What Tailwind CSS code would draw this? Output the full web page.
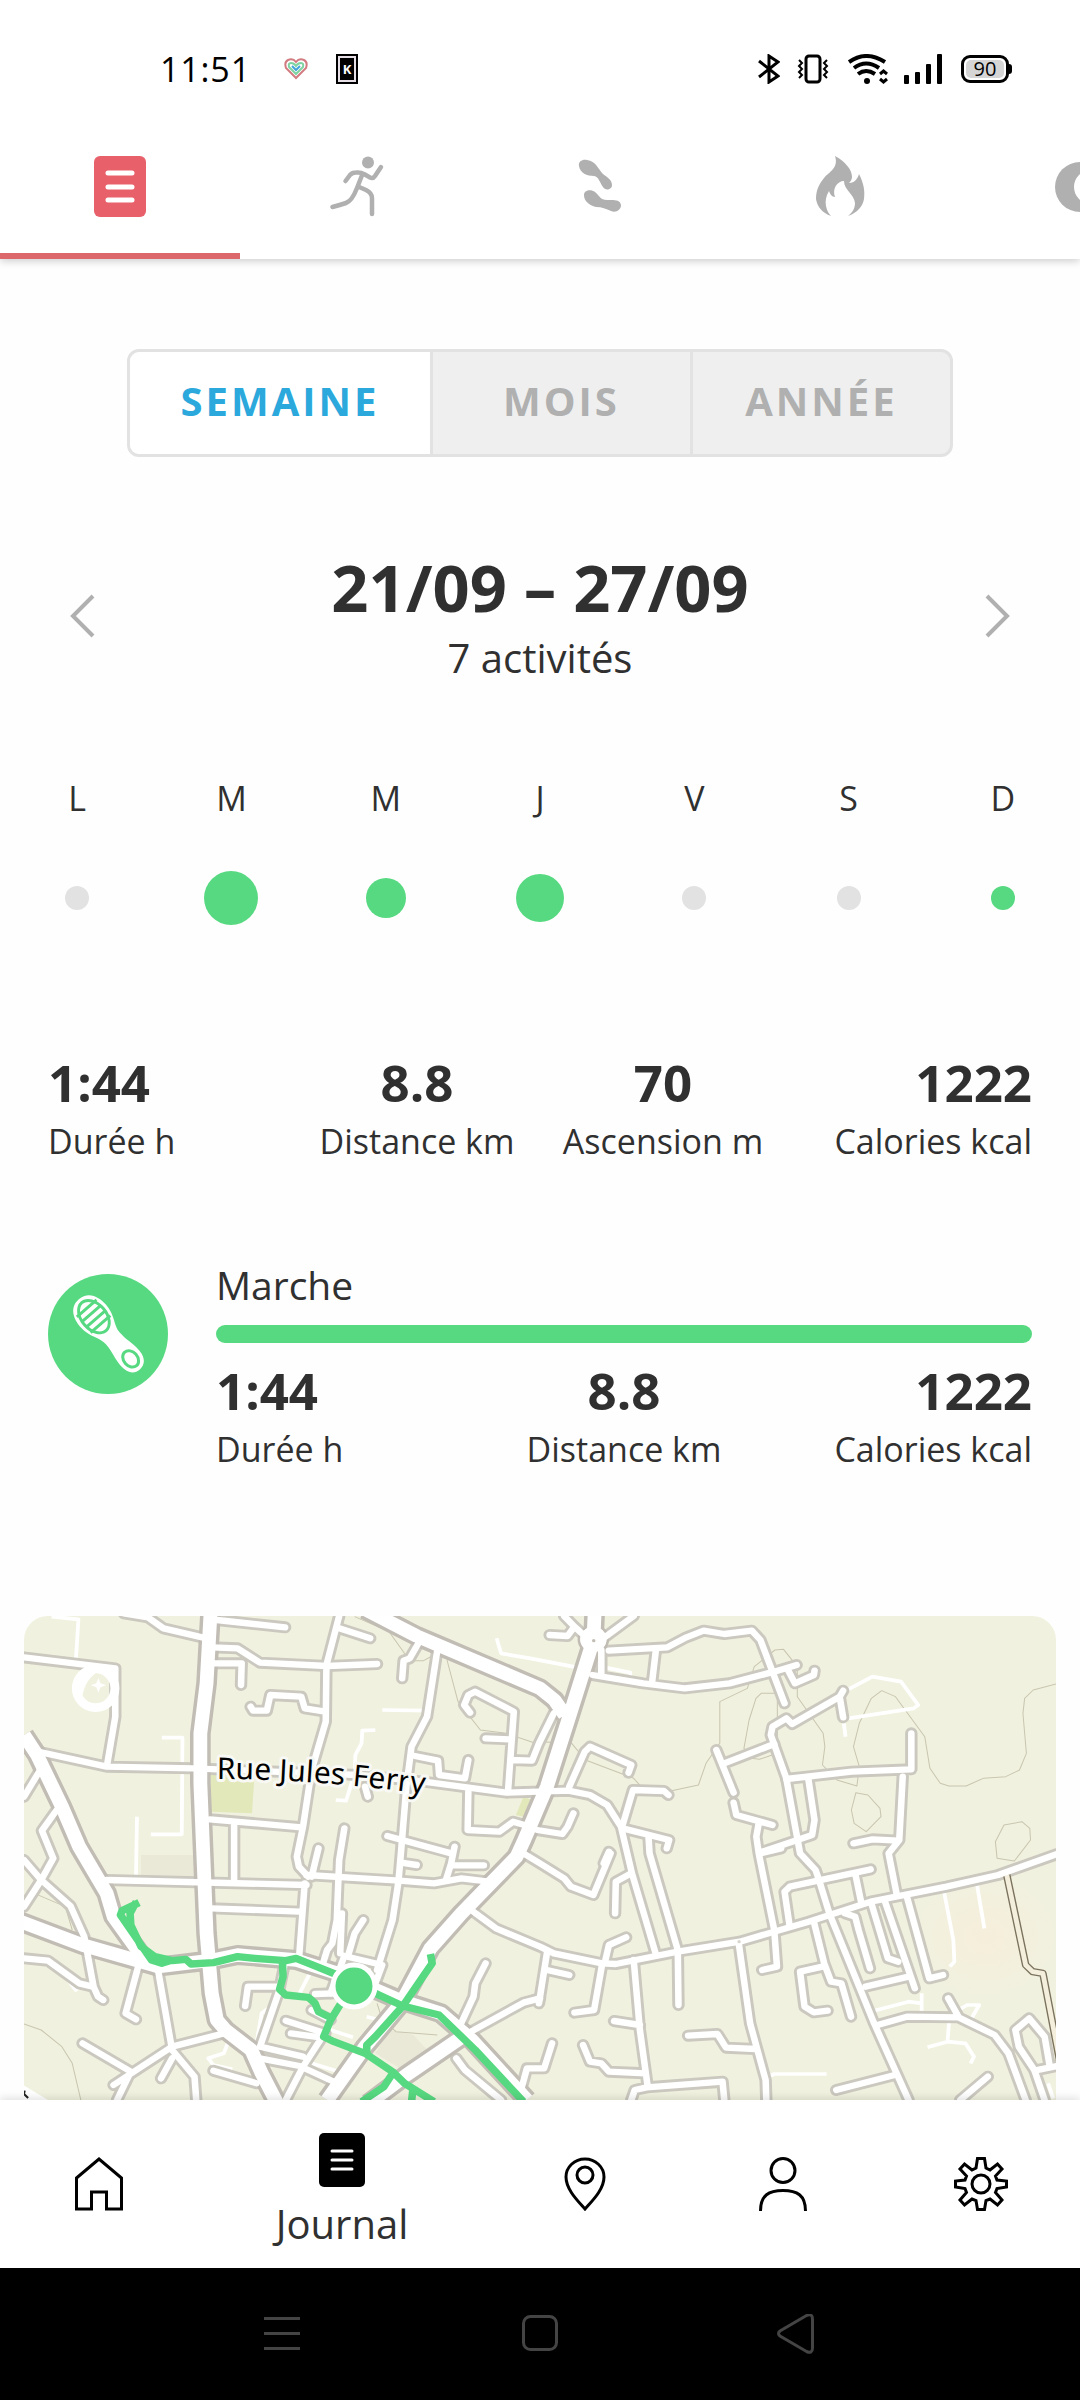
<!DOCTYPE html>
<html lang="fr">
<head>
  <meta charset="UTF-8" />
  <meta name="viewport" content="width=device-width, initial-scale=1.0" />
  <title>Journal</title>
  <script src="https://cdn.jsdelivr.net/npm/@tailwindcss/browser@4"></script>
</head>
<body class="bg-[#fefefe] text-[#303030] font-['Open_Sans',sans-serif]">
<div class="h-screen flex flex-col overflow-hidden">

  <!-- Header -->
  <header class="relative z-10 shrink-0 bg-white shadow-[0_2px_8px_rgba(0,0,0,0.2)]">
    <div class="flex items-center justify-between h-[138px] pl-[160px] pr-[68px] text-black">
      <div class="flex items-center">
        <span class="text-[34px] leading-none tracking-wide w-[124px]">11:51</span>
        <svg class="w-[24px] h-[22px] mr-[28px]" viewBox="0 0 24 22" fill="none" stroke-width="2">
          <path d="M12 20L2 10Q0 4 4 2Q9 0 12 4Q15 0 20 2Q24 4 22 10Z" stroke="#d27b80" />
          <path d="M12 16L5 9Q4 5 7 5Q10 5 12 8Q14 5 17 5Q20 5 19 9Z" stroke="#7fd3a0" />
          <path d="M8 8L12 12L16 8" stroke="#3fa4dc" />
        </svg>
        <div class="w-[22px] h-[30px] bg-black p-[2px]">
          <div class="h-full border-2 border-[#e6dfe6] text-white text-[13px] leading-none font-bold flex items-center justify-center">K</div>
        </div>
      </div>
      <div class="flex items-center">
        <svg class="w-[22px] h-[30px] mr-[17px]" viewBox="0 0 22 30" fill="none" stroke="#000" stroke-width="3">
          <path d="M1 7L20 22L11 28V2L20 8L1 23" />
        </svg>
        <svg class="w-[32px] h-[30px] mr-[19px]" viewBox="0 0 32 30" fill="none" stroke="#000" stroke-width="3">
          <rect x="9" y="2" width="14" height="26" rx="3" />
          <path d="M2 6l3 3l-3 3l3 3l-3 3l3 3l-3 3M30 6l-3 3l3 3l-3 3l3 3l-3 3l3 3" stroke-width="2" />
        </svg>
        <svg class="w-[40px] h-[30px] mr-[16px]" viewBox="0 0 40 30" fill="none" stroke="#000" stroke-width="4">
          <path d="M1 8Q18 -4 37 8M6 14Q18 5 31 14M10 20Q18 14 27 20" />
          <circle cx="19" cy="27" r="3" fill="#000" stroke="none" />
          <path d="M32 20l3.5 -3l3.5 3M32 25l3.5 3l3.5 -3" stroke-width="3" />
        </svg>
        <svg class="w-[39px] h-[30px] mr-[18px]" viewBox="0 0 39 30">
          <rect y="21" width="5" height="9" rx="1" /><rect x="11" y="18" width="5" height="12" rx="1" />
          <rect x="22" y="10" width="5" height="20" rx="1" /><rect x="33" width="5" height="30" rx="1" />
        </svg>
        <div class="flex items-center">
          <div class="w-[48px] h-[28px] border-3 border-black rounded-[9px] p-[2px]">
            <div class="h-full rounded-[5px] bg-[#d5d5d5] flex items-center justify-center text-[20px] leading-none">90</div>
          </div>
          <div class="w-[3px] h-[10px] bg-black rounded-r-sm"></div>
        </div>
      </div>
    </div>

    <nav class="flex overflow-hidden text-[#b0b0b0]">
      <button class="w-60 h-[121px] shrink-0 flex flex-col items-center border-b-6 border-[#dc686c] pt-[18px]" aria-label="Journal">
        <svg class="w-[52px] h-[61px]" viewBox="0 0 52 61">
          <rect width="52" height="61" rx="6" fill="#e8606a" />
          <path d="M14 17H38M14 31H38M14 44H38" stroke="#fff" stroke-width="5" stroke-linecap="round" />
        </svg>
      </button>
      <button class="w-60 h-[121px] shrink-0 flex justify-center pt-[18px]" aria-label="Activités">
        <svg class="w-[60px] h-[61px]" viewBox="0 0 60 61" fill="none" stroke="currentColor" stroke-width="4.5" stroke-linecap="round" stroke-linejoin="round">
          <circle cx="38" cy="6.5" r="6" fill="currentColor" stroke="none" />
          <path d="M15.5 25L20 19Q22 16.5 26 16.5Q31 16 34 18L40 21.5Q43 23 45 20L51 11" />
          <path d="M32.5 18L27 32Q22 45 16 47Q10 49 2.5 51M28 30.5L36 34Q42 37 42 42V58" />
        </svg>
      </button>
      <button class="w-60 h-[121px] shrink-0 flex justify-center pt-[21px]" aria-label="Pas">
        <svg class="w-[44px] h-[55px]" viewBox="0 0 44 55" fill="currentColor">
          <path d="M1 7C0 2 5 0 9 1C18 2 20 10 25 15C29 18 34 21 34 26C34 31 27 32 25 28C22 24 21 18 16 17C9 17 2 14 1 7Z" />
          <path d="M6 36C6 31 13 30 17 33C22 37 22 41 29 41C35 41 42 40 43 46C43 51 38 54 33 52C28 50 24 48 18 48C11 46 6 42 6 36Z" />
        </svg>
      </button>
      <button class="w-60 h-[121px] shrink-0 flex justify-center pt-[18px]" aria-label="Calories">
        <svg class="w-[49px] h-[61px]" viewBox="0 0 49 61" fill="currentColor">
          <path d="M19 0C30 6 36 14 36 21C36 24 34 26 33 27C39 27 42 22 43 18C48 28 49 35 48 43C47 50 41 57 32 60C37 56 39 52 39 47C38 38 28 34 28 25C21 25 16 33 19 41C16 41 14 38 13 35C10 40 9 45 10 50C11 55 13 58 15 60C6 57 1 50 0 43C0 33 4 27 8 22C13 16 23 12 19 0Z" />
        </svg>
      </button>
      <button class="w-60 h-[121px] shrink-0 flex justify-center pt-[24px]" aria-label="Sommeil">
        <svg class="w-[52px] h-[50px]" viewBox="0 0 52 50"><circle cx="26" cy="25" r="25" fill="currentColor" /><circle cx="37" cy="25" r="17" fill="#fff" /></svg>
      </button>
    </nav>
  </header>

  <main class="flex-1 min-h-0 overflow-hidden pt-[90px]">
    <!-- Period switch -->
    <div class="flex w-[826px] max-w-full h-[108px] mx-auto rounded-xl border-3 border-[#e2e2e2] bg-[#efefef] overflow-hidden text-[40px] leading-[52px] font-bold tracking-[3px] text-[#b0b0b0]">
      <button class="flex-[7] bg-white text-[#2ba8dc] pb-1">SEMAINE</button>
      <button class="flex-[6] border-l-3 border-[#e2e2e2] pb-1">MOIS</button>
      <button class="flex-[6] border-l-3 border-[#e2e2e2] pb-1">ANNÉE</button>
    </div>

    <!-- Current week -->
    <div class="flex items-center justify-between px-[70px] mt-[88px]">
      <button class="w-[26px]" aria-label="Semaine précédente">
        <svg class="w-[26px] h-[46px]" viewBox="0 0 26 46" fill="none" stroke="#b0b0b0" stroke-width="4"><path d="M23 3L3 23L23 43" /></svg>
      </button>
      <div class="text-center">
        <h1 class="text-[65px] leading-[84px] font-bold">21/09 – 27/09</h1>
        <p class="text-[40px] leading-[58px]">7 activités</p>
      </div>
      <button class="w-[26px]" aria-label="Semaine suivante">
        <svg class="w-[26px] h-[46px]" viewBox="0 0 26 46" fill="none" stroke="#b0b0b0" stroke-width="4"><path d="M3 3L23 23L3 43" /></svg>
      </button>
    </div>

    <!-- Days -->
    <div class="grid grid-cols-7 mt-[87px] text-center text-[34px] leading-[48px]">
      <span>L</span><span>M</span><span>M</span><span>J</span><span>V</span><span>S</span><span>D</span>
    </div>
    <div class="grid grid-cols-7 place-items-center h-[54px] mt-[49px]">
      <i class="size-6 rounded-full bg-[#e2e2e2]"></i>
      <i class="size-[54px] rounded-full bg-[#57d981]"></i>
      <i class="size-10 rounded-full bg-[#57d981]"></i>
      <i class="size-12 rounded-full bg-[#57d981]"></i>
      <i class="size-6 rounded-full bg-[#e2e2e2]"></i>
      <i class="size-6 rounded-full bg-[#e2e2e2]"></i>
      <i class="size-6 rounded-full bg-[#57d981]"></i>
    </div>

    <!-- Totals -->
    <dl class="grid grid-cols-4 px-12 mt-[122px] text-center text-[34px] leading-[48px] whitespace-nowrap">
      <div class="flex flex-col-reverse text-left"><dt>Durée h</dt><dd class="text-[51px] leading-[70px] font-bold">1:44</dd></div>
      <div class="flex flex-col-reverse"><dt>Distance km</dt><dd class="text-[51px] leading-[70px] font-bold">8.8</dd></div>
      <div class="flex flex-col-reverse"><dt>Ascension m</dt><dd class="text-[51px] leading-[70px] font-bold">70</dd></div>
      <div class="flex flex-col-reverse text-right"><dt>Calories kcal</dt><dd class="text-[51px] leading-[70px] font-bold">1222</dd></div>
    </dl>

    <section class="flex gap-12 px-12 mt-[92px]">
      <svg class="size-[120px] shrink-0 mt-[17px]" viewBox="0 0 120 120">
        <circle cx="60" cy="60" r="60" fill="#57d981" />
        <g transform="translate(61 60) rotate(-41)">
          <path d="M0 -46C13 -46 17 -34 17 -24C17 -10 9 -4 9 6C9 16 12 22 12 32C12 42 7 47 0 47C-7 47 -12 42 -12 32C-12 22 -9 16 -9 6C-9 -4 -17 -10 -17 -24C-17 -34 -13 -46 0 -46Z" fill="#fff" />
          <ellipse cy="-23" rx="14" ry="20" fill="#57d981" />
          <ellipse cy="-23" rx="11" ry="17" fill="#fff" />
          <path d="M-13 -34L13 -34M-13 -27L13 -27M-13 -20L13 -20M-13 -13L13 -13" stroke="#57d981" stroke-width="3" />
          <ellipse cy="33" rx="7" ry="9" fill="none" stroke="#57d981" stroke-width="3" />
        </g>
      </svg>
      <div class="flex-1">
        <h2 class="text-[39px] leading-[56px]">Marche</h2>
        <div class="h-[18px] mt-[12px] rounded-full bg-[#57d981]"></div>
        <dl class="grid grid-cols-3 mt-[12px] text-center text-[34px] leading-[48px] whitespace-nowrap">
          <div class="flex flex-col-reverse text-left"><dt>Durée h</dt><dd class="text-[51px] leading-[70px] font-bold">1:44</dd></div>
          <div class="flex flex-col-reverse"><dt>Distance km</dt><dd class="text-[51px] leading-[70px] font-bold">8.8</dd></div>
          <div class="flex flex-col-reverse text-right"><dt>Calories kcal</dt><dd class="text-[51px] leading-[70px] font-bold">1222</dd></div>
        </dl>
      </div>
    </section>

    <!-- Map -->
    <div class="relative mx-6 mt-[143px] h-[484px] rounded-t-3xl overflow-hidden bg-[#f1f1df]">
      <svg class="w-full h-full" viewBox="70 48 2996 1452" preserveAspectRatio="none" fill="none" stroke-linejoin="round">
        <defs>
          <radialGradient id="sand"><stop offset="0" stop-color="#f6eedb" /><stop offset="1" stop-color="#f1f1df" /></radialGradient>
          <g id="streets">
            <path d="M70 172L335 205V350L312 490M360 40L430 52L475 85L600 115M630 60L828 82M985 48L948 195L946 365L905 510L880 680L862 770L868 800L895 830" />
            <path d="M985 85L1075 115M615 142L690 145L755 188L950 198L1095 192M620 190H702L700 255M728 320L735 332H775L785 285L875 290L885 325L945 335" />
            <path d="M1215 130L1190 175L1172 182L1168 235M1270 150L1240 350L1195 440L1180 560L1165 750L1157 845L1140 960L1095 1110" />
            <path d="M1205 468L1272 482L1275 525L1350 535L1360 480M1365 338L1348 315L1360 285L1380 275L1492 335L1475 575M1410 415L1480 418M1485 480L1545 482L1565 430L1608 340" />
            <path d="M110 455L310 500L560 505L1040 525L1230 545L1470 578L1650 572L1713 585L1763 615L1803 680L1835 820L1905 1065" />
            <path d="M120 505L70 590M165 630L122 692L155 775L120 840L70 920M70 780L120 840L205 918L245 1010L272 1160L285 1190L300 1200" />
            <path d="M610 658L875 682M680 675V840M1000 685L985 780L978 960L965 1030L950 1050L938 1090M925 745L905 830M1060 560L1068 590M1125 708L1310 760M1320 740L1310 790L1295 840" />
            <path d="M1360 575L1358 690L1450 695L1490 665L1540 680M310 840L890 855M890 825L1160 842L1260 850L1340 835L1420 845M885 850L868 1080M615 925L870 935M1165 788L1210 795M1315 796H1405" />
            <path d="M993 940L988 1060M1055 960L1030 1000L1010 1070M1000 1068L1110 1095L1090 1150M1000 1068L960 1180M70 1075L140 1082L230 1150L270 1160" />
            <path d="M400 1105L365 1240L395 1258M460 1115L500 1350L565 1430L570 1500M650 1300L500 1340L330 1455M240 1330L380 1415L340 1500M500 1375L468 1435" />
            <path d="M712 1218L720 1160H810M825 1100L810 1175L755 1340M830 1262L945 1300M845 1300L930 1312M755 1340L880 1370M755 1375L870 1398L980 1450M930 1320L880 1400L830 1500M620 1412L745 1450M915 1182L975 1180M905 1230L960 1260" />
            <path d="M1410 1090L1380 1150L1375 1190L1330 1290M1375 935L1440 985L1568 1040L1608 1060L1748 1090L1788 1092L1968 1055L2148 1025L2348 965L2528 905L2748 860L2898 825L3070 762" />
            <path d="M1568 1195L1520 1208L1350 1305M1325 1375L1350 1410L1455 1500M1510 1480L1530 1405L1580 1405L1603 1330M1520 760L1568 790L1638 835L1658 860L1723 885L1773 760" />
            <path d="M1596 105L1648 108L1668 80L1638 48M1668 80L1700 110M1840 48L1758 110M1768 152L1938 142L1993 112L2043 92L2103 102L2183 92L2208 120L2278 310" />
            <path d="M1905 145L1893 250M1720 225L1868 250L1988 265L2118 250L2248 215L2313 195M1746 150V220M2288 210L2308 250L2363 225L2365 212" />
            <path d="M2448 272L2438 290L2300 372L2283 355L2243 380L2238 405L2283 535L2323 760L2368 810L2378 840L2408 940L2538 1270L2638 1500M2438 290L2448 352" />
            <path d="M2103 490L2248 432M2080 450L2130 578M2130 608L2138 645L2243 675M2203 670L2196 710L2203 760L2248 990L2256 1100L2213 1110M2208 757L2358 705L2365 660L2346 530M2283 537L2473 515L2646 508V400M2621 530L2611 720L2580 760L2603 880M2478 730L2533 718L2608 722" />
            <path d="M1653 560L1698 455L1713 440L1833 495L1825 518M1808 675L1838 570L1928 573L1941 585M1808 685L1943 720L1936 745M1883 710L1886 760L1968 1050L1970 1215M1560 690L1633 702L1648 680L1665 640M1768 755L1753 790M1833 820L1788 845L1786 940" />
            <path d="M1758 1080L1768 1035L1818 1012M1588 1060L1565 1210M1588 1110L1653 1125M1748 1095L1725 1230L1668 1238M1840 1080L1858 1290L1880 1455M1783 1263L1858 1275M1693 1335L1713 1385L1746 1390L1768 1415L1873 1420M1833 1500L1843 1470L1878 1462L2098 1445L2103 1500" />
            <path d="M2145 1030L2178 1270L2223 1440L2225 1500M1998 1307L2083 1302L2108 1343L2193 1347M2428 1470L2598 1425M2293 980L2278 875L2293 860L2528 808M2483 820L2500 905M2363 965L2393 1090L2413 1145L2443 1150L2471 1250" />
            <path d="M2388 1100L2323 1115L2336 1220L2363 1237L2403 1232M2453 940L2483 950L2493 990L2526 1105M2530 910L2578 1075L2608 1085M2568 900L2656 1165M2633 890L2698 1135L2738 1125M2513 1160L2638 1130" />
            <path d="M2548 1275L2633 1250L2783 1252L2888 1305L2928 1360L2978 1500M2753 1195L2783 1250M2788 1500L2868 1430M3048 1400L3033 1310L2988 1255L2948 1290L2958 1340L3003 1410L3033 1500M3003 1412L3068 1398M2208 760L2268 745" />
          </g>
          <g id="avenues">
            <path d="M1060 28L1210 108L1568 265L1610 300L1640 345M1727 30L1723 120L1653 350L1588 560L1520 725L1500 770L1340 940L1250 1045L1165 1210L1060 1340L950 1500" />
            <path d="M70 405L108 465L180 620L230 740L310 880L330 950L420 1080L470 1105M612 30L600 250L582 400V550L590 750L600 1000L615 1180L630 1260L655 1290L730 1350L760 1420L805 1510" />
            <path d="M60 965L240 1035L460 1100L620 1080L690 1065L860 1080L980 1120L1160 1200L1280 1240L1370 1320L1530 1500M1350 1305L1180 1425L1070 1510" />
          </g>
        </defs>

        <!-- land -->
        <ellipse cx="2860" cy="1010" rx="210" ry="180" fill="url(#sand)" />
        <path d="M612 520L738 545L732 640L612 635Z" fill="#e3e8bb" />
        <path d="M1520 590L1545 600L1520 650L1498 645Z" fill="#e3e8bb" />
        <path d="M410 765H575V830H410ZM1130 1290L1200 1305L1250 1360L1170 1410L1090 1360Z" fill="#eae8d7" />

        <!-- contour lines -->
        <g stroke="#c8c6b0" stroke-width="3">
          <path d="M1030 50L1130 95L1190 182H1230L1260 165M1298 180L1330 305L1395 390L1470 400L1555 430M1568 425L1660 430L1700 480L1840 535L1870 570L1950 572L2028 555L2050 490L2090 430V305L2170 265L2190 200L2250 150L2275 148L2315 200V290L2390 400L2395 440L2388 495L2430 540L2488 558L2495 500L2478 440L2495 370L2530 295L2560 272L2600 290L2685 410L2700 505L2730 550L2755 558H2805L2855 535L2920 530L2960 510L2980 460L2970 340L2975 295L3000 270L3066 252" />
          <path d="M2257 280H2210L2195 295L2175 360L2160 445L2180 475L2205 478L2257 460ZM2485 578L2520 585L2555 625L2558 650L2515 695L2480 670L2472 630ZM2915 675L2967 665L2990 685L2992 720L2945 783L2895 775L2890 725ZM100 880L190 920L210 990M70 1272L120 1290L180 1340L210 1390L235 1500M1095 1210L1110 1260L1150 1295L1270 1305" />
        </g>

        <!-- footpaths -->
        <g stroke="#fff" stroke-width="11">
          <path d="M150 50L228 58L220 190M470 413H530L528 703H438M398 650L395 835M1110 330L1240 332M1090 390L1052 392L1050 430L1032 465L1030 520L1005 602L975 600M1442 115L1455 160L1540 175L1690 205L1740 235L1890 265M1745 200L1830 218V245" />
          <path d="M2463 268L2533 230L2616 245L2666 315L2653 325L2463 355M2450 370L2455 410M780 1225L760 1240L745 1330M665 1320L650 1360L605 1375L620 1395L675 1408M900 1120L870 1180M190 1130L220 1170L240 1155M960 1290L1025 1312M1065 1250L1110 1262M890 1385L1000 1420M2228 1432L2248 1422H2400" />
          <path d="M2538 1232L2638 1205L2676 1210M2676 1180V1245M2783 1230L2808 1215H2843L2818 1260M2756 1260L2751 1325L2693 1342M2751 1325L2803 1330L2828 1370L2818 1390M2740 870L2768 1020L2771 1085L2758 1100M2836 850L2858 985M3043 1450L3058 1495" />
        </g>

        <use href="#streets" stroke="#cac8bf" stroke-width="36" stroke-linecap="round" />
        <use href="#avenues" stroke="#c1bcb4" stroke-width="60" />
        <path d="M2923 825L2978 1095L2998 1115L3028 1120L3080 1400" stroke="#7a725c" stroke-width="22" />
        <path d="M2923 825L2978 1095L2998 1115L3028 1120L3080 1400" stroke="#f4efdc" stroke-width="14" />
        <circle cx="1723" cy="118" r="42" fill="#fff" stroke="#c1bcb4" stroke-width="8" />
        <use href="#streets" stroke="#fff" stroke-width="19" stroke-linecap="round" />
        <use href="#avenues" stroke="#fff" stroke-width="40" />
        <circle cx="1723" cy="118" r="38" fill="#fff" />
        <circle cx="1724" cy="122" r="5" fill="#c1bcb4" />
        <circle cx="2146" cy="1025" r="5" fill="#d8d6cd" />
        <ellipse cx="278" cy="265" rx="56" ry="58" stroke="#fff" stroke-width="26" />
        <path d="M235 320Q240 240 285 215L225 230Z" fill="#fff" />
        <path d="M286 234L292 250L308 256L292 262L286 278L280 262L264 256L280 250Z" fill="#fff" />
        <path d="M60 1450L140 1500H60Z" fill="#fff" />
        <path d="M72 1472L70 1482L82 1494" stroke="#222" stroke-width="6" />

        <!-- recorded route -->
        <g stroke="#57d981" stroke-width="22">
          <path d="M404 908L355 932L350 945L400 1020L440 1080L470 1090L500 1080M396 905L378 940L380 975L410 1040L450 1070L500 1082L540 1078L555 1092L620 1088L690 1070L740 1075L830 1082L860 1075L920 1100L980 1125" />
          <path d="M820 1080L822 1130L812 1168L830 1185L895 1192L915 1210L925 1235L955 1250M990 1210L960 1260L940 1310L970 1325L1060 1360L1140 1415L1175 1450L1260 1505M1140 1420L1115 1460L1050 1505M1200 1460L1195 1505" />
          <path d="M1090 1180L1170 1218L1275 1245L1380 1350L1520 1505M1250 1062L1255 1090L1215 1150L1170 1218L1090 1310L1065 1335V1365" />
        </g>
      </svg>
      <svg class="absolute inset-0 w-full h-full">
        <path id="street-name" d="M193 163Q300 163 430 182" fill="none" />
        <text font-family="Noto Sans" font-size="30" fill="#000" stroke="#f8f8f4" stroke-width="6" stroke-linejoin="round" paint-order="stroke"><textPath href="#street-name">Rue Jules Ferry</textPath></text>
        <circle cx="330" cy="370" r="21" fill="#57d981" stroke="#fff" stroke-width="5" />
      </svg>
    </div>
  </main>

  <!-- Bottom navigation -->
  <nav class="relative z-10 shrink-0 flex h-[168px] bg-white shadow-[0_-2px_8px_rgba(0,0,0,0.12)]">
    <a href="#" class="flex-[11] flex items-center justify-center" aria-label="Accueil">
      <svg class="w-[48px] h-[54px]" viewBox="0 0 48 54" fill="none" stroke="#000" stroke-width="3"><path d="M1.5 21L24 2L46.5 21V52H31.5V35H16.5V52H1.5Z" /></svg>
    </a>
    <a href="#" class="flex-[16] flex flex-col items-center pt-[33px]">
      <svg class="w-[46px] h-[54px]" viewBox="0 0 46 54"><rect width="46" height="54" rx="5" /><path d="M13 18H33M13 27H33M13 36H33" stroke="#fff" stroke-width="3" stroke-linecap="round" /></svg>
      <span class="text-[40px] leading-[52px] mt-[11px]">Journal</span>
    </a>
    <a href="#" class="flex-[11] flex items-center justify-center" aria-label="Carte">
      <svg class="w-[42px] h-[54px]" viewBox="0 0 42 54" fill="none" stroke="#000" stroke-width="3"><path d="M21 52C15 45 2 33 2 20A19 18 0 0 1 40 20C40 33 27 45 21 52Z" /><circle cx="21" cy="18" r="8" /></svg>
    </a>
    <a href="#" class="flex-[11] flex items-center justify-center" aria-label="Profil">
      <svg class="w-[48px] h-[54px]" viewBox="0 0 48 54" fill="none" stroke="#000" stroke-width="3"><circle cx="24" cy="13.5" r="12" /><path d="M1.5 54C1.5 38 10 33.5 24 33.5S46.5 38 46.5 54" /></svg>
    </a>
    <a href="#" class="flex-[11] flex items-center justify-center" aria-label="Réglages">
      <svg class="w-[54px] h-[54px]" viewBox="0 0 54 54" fill="none" stroke="#000" stroke-width="3">
        <path d="M23.5 1.5H30.5L32 11L36 13L43.5 7L48 12L41.5 19L43 23L52.5 24V30L43 31.5L41.5 35.5L48 43L43.5 48L36 42L32 43.5L30.5 52.5H23.5L22 43.5L18 42L10.5 48L6 43L12.5 35.5L11 31.5L1.5 30V24L11 23L12.5 19L6 12L10.5 7L18 13L22 11Z" />
        <circle cx="27" cy="27" r="9" />
      </svg>
    </a>
  </nav>

  <!-- System bar -->
  <div class="relative z-10 shrink-0 grid grid-cols-[1fr_auto_1fr] items-center h-[132px] bg-black text-[#444]">
    <button class="justify-self-end mr-[222px]" aria-label="Récents">
      <svg class="w-[36px] h-[40px]" viewBox="0 0 36 40" stroke="currentColor" stroke-width="3"><path d="M0 4.5H36M0 19.5H36M0 34.5H36" /></svg>
    </button>
    <button aria-label="Écran d'accueil">
      <svg class="w-[36px] h-[40px]" viewBox="0 0 36 40" fill="none" stroke="currentColor" stroke-width="3"><rect x="1.5" y="2.5" width="33" height="33" rx="7" /></svg>
    </button>
    <button class="justify-self-start ml-[219px]" aria-label="Retour">
      <svg class="w-[38px] h-[40px]" viewBox="0 0 38 40" fill="none" stroke="currentColor" stroke-width="3"><path d="M29.5 1.5L3 17Q0 19.5 3 22L29.5 37.5Q35.5 40 35.5 34V5Q35.5 -1 29.5 1.5Z" /></svg>
    </button>
  </div>
</div>
</body>
</html>
